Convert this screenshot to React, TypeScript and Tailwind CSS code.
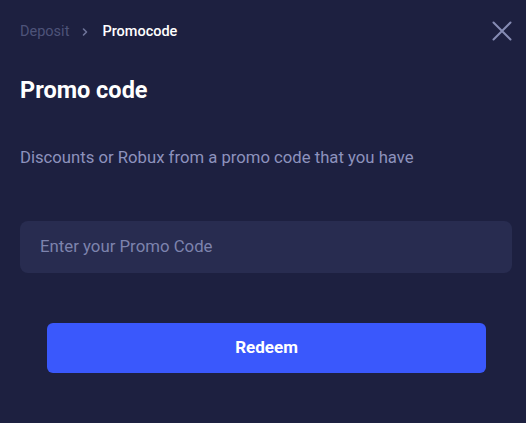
export default function App() {
  return (
    <div className="w-[526px] h-[423px] bg-[#1d2040] font-['Roboto',sans-serif] pl-5 pr-[14px] pt-[22px] overflow-hidden">
      {/* Header */}
      <div className="flex items-center justify-between h-5">
        <div className="flex items-center text-[14.5px] leading-5">
          <span className="text-[#4d5379]">Deposit</span>
          <svg width="8" height="10" viewBox="0 0 8 10" className="ml-[12px] mr-[13px]" fill="none">
            <path d="M2.5 2 L5.5 5 L2.5 8" stroke="#6e7499" strokeWidth="1.6" strokeLinecap="round" strokeLinejoin="round" />
          </svg>
          <span className="text-white font-medium">Promocode</span>
        </div>
        <button className="-mt-[2px]">
          <svg width="20" height="20" viewBox="0 0 20 20" fill="none">
            <path d="M1.5 1.5 L18.5 18.5 M18.5 1.5 L1.5 18.5" stroke="#868cb4" strokeWidth="2" strokeLinecap="round" />
          </svg>
        </button>
      </div>

      {/* Title */}
      <h1 className="mt-[34px] text-[23.5px] leading-7 font-bold text-white">Promo code</h1>

      {/* Description */}
      <p className="mt-[42px] text-[16.7px] leading-6 text-[#8d92bd]">
        Discounts or Robux from a promo code that you have
      </p>

      {/* Input */}
      <div className="mt-[51px] h-[52px] rounded-lg bg-[#282c50] flex items-center px-5">
        <input
          placeholder="Enter your Promo Code"
          className="w-full bg-transparent outline-none text-[16.8px] text-white placeholder:text-[#7d83ad]"
        />
      </div>

      {/* Button */}
      <div className="mt-[50px] pl-[27px] pr-[26px]">
        <button className="w-full h-[50px] rounded-md bg-[#3a58fc] text-white text-[17px] font-bold">
          Redeem
        </button>
      </div>
    </div>
  )
}
